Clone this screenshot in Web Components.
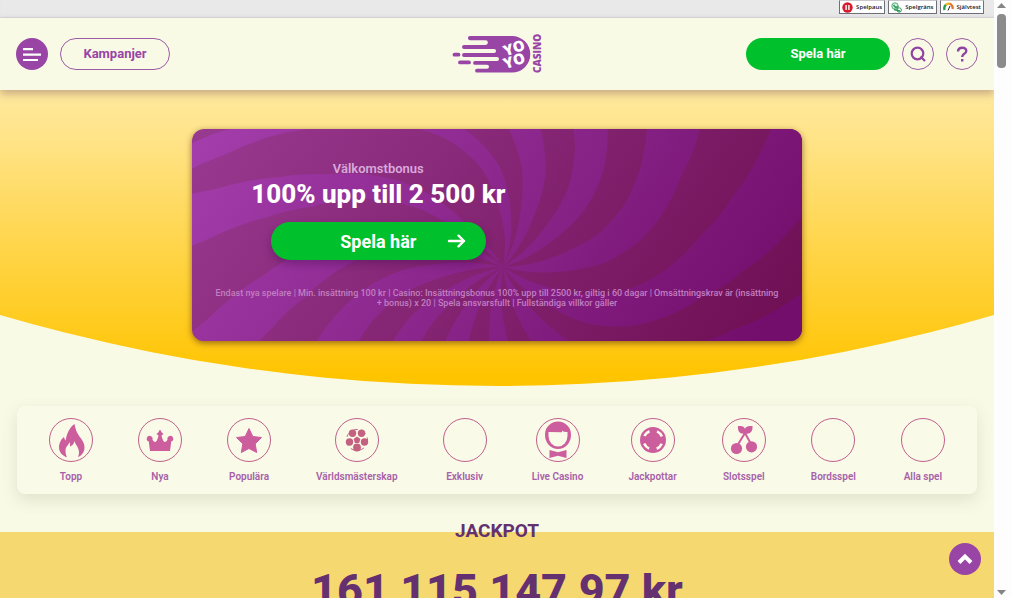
<!DOCTYPE html>
<html lang="sv">
<head>
<meta charset="utf-8">
<meta name="viewport" content="width=device-width, initial-scale=1">
<title>YoYo Casino</title>
<style>
  body { margin: 0; font-family: Roboto, "Liberation Sans", sans-serif; background: #f9fae6; }
</style>
</head>
<body>
<yoyo-app></yoyo-app>
<script>
const define = (name, html, setup) => {
  const tpl = document.createElement('template');
  tpl.innerHTML = `<style>*{box-sizing:border-box}button{font-family:inherit;margin:0;cursor:pointer}a{text-decoration:none}svg{display:block}</style>` + html;
  customElements.define(name, class extends HTMLElement {
    constructor() {
      super();
      this.attachShadow({ mode: 'open' }).append(tpl.content.cloneNode(true));
      if (setup) setup(this, this.shadowRoot);
    }
  });
};

/* Responsible gambling strip */
define('yoyo-safety-bar', `
<style>
  :host { display: flex; justify-content: flex-end; gap: 3px; height: 18px; padding-right: 10px; background: #e9e9e9; box-shadow: inset 0 -1px 1px #d8d8dc; }
  a { display: flex; align-items: center; gap: 3px; height: 14px; padding: 0 2px; border: 1px solid #707078; border-top-color: #c8c8cc; background: #fff; color: #16161c; font: 600 6px/12px "Open Sans", sans-serif; }
</style>
<a href="#spelpaus"><svg width="11" height="11" viewBox="0 0 11 11"><circle cx="5.500" cy="5.500" r="5.200" fill="#d71a2c"/><path d="M4.100 3v5M6.900 3v5" stroke="#fff" stroke-width="1.400"/></svg>Spelpaus</a>
<a href="#spelgrans"><svg width="11" height="11" viewBox="0 0 11 11"><circle cx="4" cy="4" r="3.200" fill="#d9f0e0" stroke="#2a9b58" stroke-width=".8"/><path d="M2.500 3l2 2.500 3-1M3 7.500L9 9" fill="none" stroke="#2a9b58" stroke-width="1.400"/><circle cx="8.200" cy="8" r="2.200" fill="none" stroke="#2a9b58"/></svg>Spelgräns</a>
<a href="#sjalvtest"><svg width="11" height="11" viewBox="0 0 11 11" fill="none" stroke-width="2.400"><path d="M1.700 8A4.500 4.500 0 0 1 3 2.800" stroke="#2c9a50"/><path d="M3 2.800A4.500 4.500 0 0 1 6.500 1.700" stroke="#f0b51c"/><path d="M6.500 1.700A4.500 4.500 0 0 1 9.500 7" stroke="#e5752a"/><path d="M5 8.500L7 4" stroke="#222" stroke-width="1"/></svg>Självtest</a>
`);

define('yoyo-logo', `
<style>:host { display: block; } svg { overflow: visible; } text { font-family: "Open Sans", sans-serif; font-weight: 800; }</style>
<a href="#hem" aria-label="YoYo Casino">
<svg width="90" height="42" viewBox="0 -3 90 42">
  <path fill="#9845a6" d="M18 0H60a18.300 18.300 0 0 1 0 36.600H25a1.900 1.900 0 0 1 0-3.800h10a2 2 0 0 0 0-4H23a1.900 1.900 0 0 1 0-3.800h22a2 2 0 0 0 0-4H12a1.900 1.900 0 0 1 0-3.900h30a2 2 0 0 0 0-4.100H12a2 2 0 0 1 0-4h21.500a2.100 2.100 0 0 0 0-4.800H18a2 2 0 0 1 0-4.200z"/>
  <path stroke="#9845a6" stroke-width="3.800" stroke-linecap="round" d="M2.500 18.700h4M8 26.400h9"/>
  <g transform="rotate(-19 61 18)" fill="#fff" font-size="15">
    <text x="53" y="18">YO</text><text x="49" y="30">YO</text>
  </g>
  <text transform="translate(89 37) rotate(-90)" fill="#9845a6" font-size="10">CASINO</text>
</svg></a>
`);

define('yoyo-header', `
<style>
  :host { display: grid; grid-template-columns: 1fr auto 1fr; align-items: center; height: 72px; padding: 0 16px; background: #f9fae6; position: relative; z-index: 1; box-shadow: 0 4px 8px rgba(120, 80, 90, .4); }
  div { display: flex; gap: 12px; }
  .right { justify-content: flex-end; }
  button, a { display: grid; place-items: center; height: 32px; padding: 0; border-radius: 16px; font-size: 13px; font-weight: 700; line-height: 16px; }
  .round { width: 32px; border: 1px solid #9b5ba5; background: none; }
  .menu { border: 0; background: #9845a6; }
  .camp { width: 110px; border: 1px solid #9b5ba5; color: #9845a6; }
  .play { width: 144px; border: 0; background: #00c12b; color: #fff; }
</style>
<div>
  <button class="round menu" aria-label="Meny"><svg width="32" height="32" fill="none" stroke="#fff" stroke-width="2.200"><path d="M7 11.200h10M7 16.700h18M7 22h15"/></svg></button>
  <a class="camp" href="#kampanjer">Kampanjer</a>
</div>
<yoyo-logo></yoyo-logo>
<div class="right">
  <button class="play">Spela här</button>
  <button class="round" aria-label="Sök"><svg width="16" height="16" fill="none" stroke="#8f45a0" stroke-width="2.200"><circle cx="7.500" cy="7.500" r="5.800"/><path d="M10.500 10.500l4.500 4.500"/></svg></button>
  <button class="round" aria-label="Hjälp"><svg width="16" height="16" fill="none" stroke="#8f45a0" stroke-width="2.400"><path d="M4 5.500C4.200.500 12.500.500 12.300 5c-.200 3-4.100 2.700-4.100 6M8.200 13v2.500"/></svg></button>
</div>
`);

/* Candy swirl: every ray is bounded by two spirals, each given as [angle, twist strength] */
define('yoyo-swirl', `
<style>:host { display: block; } svg { width: 100%; height: 100%; }</style>
<svg viewBox="0 0 610 212" preserveAspectRatio="xMidYMid slice" aria-hidden="true">
  <defs>
    <linearGradient id="d" gradientUnits="userSpaceOnUse" x1="60" y1="-60" x2="520" y2="270"><stop stop-color="#983990"/><stop offset="1" stop-color="#701055"/></linearGradient>
    <linearGradient id="l" gradientUnits="userSpaceOnUse" x1="60" y1="-60" x2="520" y2="270"><stop stop-color="#a23dab"/><stop offset="1" stop-color="#730e6c"/></linearGradient>
  </defs>
  <rect width="610" height="212" fill="url(#d)"/>
  <path class="rays" fill="url(#l)"/>
</svg>
`, (host, root) => {
  const twist = [[0, -60], [50, -51], [100, -43], [140, -34], [170, -26], [200, -18], [240, -10], [300, 0], [380, 9]];
  const rays = [
    [[9, 1], [27, 1]], [[45, 1], [62, 1]], [[78, 1], [93, 1]], [[108, 1], [122, 1]],
    [[152, 1.4], [158, 1.3]], [[165, .7], [175, .7]], [[190, .8], [203, .8]],
    [[216, .8], [231, .85]], [[246, .9], [261, .95]], [[276, 1], [291, 1]],
    [[306, 1], [321, 1]], [[337, 1], [355, 1]]
  ];
  const smooth = twist.flatMap((p, i) => {
    if (i === twist.length - 1) return [p];
    const q = twist[i + 1], a = twist[i - 1] || p, b = twist[i + 2] || q;
    return [0, .25, .5, .75].map(u => [p[0] + (q[0] - p[0]) * u,
      .5 * (2 * p[1] + (q[1] - a[1]) * u + (2 * a[1] - 5 * p[1] + 4 * q[1] - b[1]) * u * u + (3 * p[1] - a[1] - 3 * q[1] + b[1]) * u * u * u)]);
  });
  const spiral = ([deg, k]) => smooth.map(([r, t]) => {
    const a = (deg + k * t) * Math.PI / 180;
    return (311 + r * Math.cos(a)).toFixed(1) + ' ' + (138 - r * Math.sin(a)).toFixed(1);
  });
  const d = rays.map(([from, to]) => 'M' + spiral(from).join('L') + 'L' + spiral(to).reverse().join('L') + 'Z').join('');
  root.querySelector('.rays').setAttribute('d', d);
});

define('yoyo-hero', `
<style>
  :host { display: block; height: 296px; padding: 39px 16px 0; background: linear-gradient(#ffe99e, #ffe48a 15%, #ffc400 97%); clip-path: circle(1775px at 50% calc(100% - 1775px)); }
  article { position: relative; max-width: 610px; height: 212px; margin: 0 auto; padding: 31px 29px 0; border-radius: 12px; overflow: hidden; text-align: center; }
  .shade { max-width: 610px; margin: 0 auto; border-radius: 12px; box-shadow: 0 2px 6px rgba(80, 40, 20, .6); }
  yoyo-swirl { position: absolute; inset: 0; }
  .offer { position: relative; width: 57%; display: flex; flex-direction: column; align-items: center; }
  p { margin: 0; }
  .kicker { font-size: 13px; line-height: 18px; font-weight: 600; color: #d9a9dc; }
  h1 { margin: 0 0 12px; font-size: 26px; line-height: 32px; font-weight: 800; color: #fff; white-space: nowrap; }
  button { display: grid; grid-template-columns: 1fr auto 1fr; align-items: center; width: 215px; height: 38px; padding: 0 20px; border: 0; border-radius: 19px; background: #00c12b; color: #fff; font-size: 18px; font-weight: 700; box-shadow: 0 4px 8px rgba(70, 10, 80, .4); }
  button span { grid-column: 2; }
  svg { justify-self: end; }
  .terms { position: relative; margin: 28px -8px 0; font-size: 9px; line-height: 10px; font-weight: 500; color: #c27fc0; }
</style>
<div class="shade"><article>
  <yoyo-swirl></yoyo-swirl>
  <div class="offer">
    <p class="kicker">Välkomstbonus</p>
    <h1>100% upp till 2 500 kr</h1>
    <button><span>Spela här</span><svg width="19" height="14" fill="none" stroke="#fff" stroke-width="2.400" stroke-linecap="round" stroke-linejoin="round"><path d="M2 7h15M11.500 1.700L17 7l-5.500 5.300"/></svg></button>
  </div>
  <p class="terms">Endast nya spelare | Min. insättning 100 kr | Casino: Insättningsbonus 100% upp till 2500 kr, giltig i 60 dagar | Omsättningskrav är (insättning + bonus) x 20 | Spela ansvarsfullt | Fullständiga villkor gäller</p>
</article></div>
`);

define('yoyo-category', `
<style>
  :host { display: block; }
  a { display: flex; flex-direction: column; align-items: center; gap: 8px; color: #a661a8; font-size: 10px; line-height: 14px; font-weight: 600; white-space: nowrap; }
  i { display: grid; place-items: center; width: 44px; height: 44px; border: 1px solid #c0608c; border-radius: 50%; color: #cd5e9e; }
  ::slotted(svg) { display: block; fill: currentColor; }
</style>
<a href="#kategori"><i><slot name="icon"></slot></i><span><slot></slot></span></a>
`);

define('yoyo-categories', `
<style>
  :host { display: flex; justify-content: space-between; height: 88px; margin: 20px 17px 0; padding: 12px 32px 0; border-radius: 8px; box-shadow: 0 6px 16px rgba(100, 110, 80, .17); background: #fafae8; }
</style>
<yoyo-category>Topp<svg slot="icon" width="42" height="42"><path d="M24.500 5c1 5 2 8.500 5 12.500 3.500 4.500 5 7 5 11 0 4.500-3 8.500-6.500 9.500 1.800-4 1-7-.5-10-1-2-2.500-3.500-3-6-.5 3-2.500 5-4.500 5.500.2-1.500 0-3-.5-4.500-.8 3-4 4.500-4 8.500 0 3 .5 5 1.500 6.700-4.500-1.200-8-5-8-9.700 0-4.500 2.500-9 5-10.500.3 1.500.8 2.500 1.700 3.500C16.500 14.500 20 8 24.500 5z"/></svg></yoyo-category>
<yoyo-category>Nya<svg slot="icon" width="42" height="42"><path d="M11 32L9.800 22.500a2.900 2.900 0 1 1 3.700-2.200c-.2 1 1.500 2.700 3 2.700 1.500-1 2.500-4 3-6.500L17.500 15l1.700-1.500L21 10.500l1.800 3 1.700 1.500-2 1.500c.5 2.500 1.500 5.500 3 6.500 1.500 0 3.200-1.700 3-2.700a2.900 2.900 0 1 1 3.700 2.200L31 32z"/></svg></yoyo-category>
<yoyo-category>Populära<svg slot="icon" width="42" height="42"><path stroke="currentColor" stroke-linejoin="round" d="M21 9.500l3.800 8 8.700 1-6.300 6.400 1.500 8.600-7.700-4-7.700 4 1.500-8.600-6.300-6.400 8.700-1z"/></svg></yoyo-category>
<yoyo-category>Världsmästerskap<svg slot="icon" width="42" height="42" style="color:#c46080"><circle cx="21" cy="21" r="10.500" fill="none" stroke="currentColor" stroke-dasharray="5 4"/><g><circle cx="16.500" cy="14.300" r="3.700"/><circle cx="25.500" cy="14.300" r="3.700"/><circle cx="13.500" cy="23" r="3.700"/><circle cx="28.500" cy="23" r="3.700"/><circle cx="21" cy="28.500" r="3.900"/><path d="M21 17.500l3.400 2.500-1.300 4h-4.200l-1.300-4z"/></g></svg></yoyo-category>
<yoyo-category>Exklusiv</yoyo-category>
<yoyo-category>Live Casino<svg slot="icon" width="42" height="42"><path fill-rule="evenodd" d="M21 2.500a13 13 0 0 1 13 13.500 13 14 0 0 1-26 0A13 13 0 0 1 21 2.500zM11.500 13v4a9.500 10.500 0 0 0 19 0v-4l-4-.2-.8-1.500-.8 2z"/><path d="M12.500 31l8.500 2.300 8.500-2.300v8L21 36.800 12.500 39z"/></svg></yoyo-category>
<yoyo-category>Jackpottar<svg slot="icon" width="42" height="42"><circle cx="21" cy="21" r="13"/><circle cx="21" cy="21" r="9.500" fill="none" stroke="#fafae8" stroke-width="2.600" stroke-dasharray="7.200 7.723" stroke-dashoffset="-3.860"/></svg></yoyo-category>
<yoyo-category>Slotsspel<svg slot="icon" width="42" height="42"><circle cx="13.500" cy="29.500" r="5.600"/><circle cx="28.500" cy="27.800" r="5.600"/><path d="M14 27l8-13 6 11" fill="none" stroke="currentColor" stroke-width="2"/><path d="M22 14.500c-5 1-7.500-2-7-7.500 4 0 6.500.5 7 3 .5-2.500 3.500-3 7.500-3 .5 5.500-2.500 8.500-7.500 7.500z"/></svg></yoyo-category>
<yoyo-category>Bordsspel</yoyo-category>
<yoyo-category>Alla spel</yoyo-category>
`);

define('yoyo-jackpot', `
<style>
  :host { display: flex; flex-direction: column; align-items: center; margin-top: 38px; height: 120px; background: #f5d870; color: #64306f; }
  h2 { margin: -13px 0 0; font-size: 19px; line-height: 24px; font-weight: 700; }
  p { margin: 24px 0 0; font-size: 45px; line-height: 48px; font-weight: 800; }
</style>
<h2>JACKPOT</h2>
<p>161 115 147,97 kr</p>
`);

define('yoyo-scrollbar', `
<style>
  :host { display: flex; flex-direction: column; align-items: center; width: 18px; padding: 2px 3px 2px 0; background: #fdfdfd; }
  span { width: 9px; height: 54px; margin-top: 6px; border-radius: 4px; background: #8b8b8b; }
  svg:last-child { margin-top: auto; }
</style>
<svg width="9" height="6" fill="#858585"><path d="M0 6l4.500-5L9 6z"/></svg>
<span></span>
<svg width="9" height="6" fill="#858585"><path d="M0 0h9L4.500 5z"/></svg>
`);

define('yoyo-app', `
<style>
  :host { display: flex; height: 100vh; overflow: hidden; }
  main { position: relative; flex: 1; min-width: 0; overflow: hidden; background: #f9fae6; }
  .up { position: absolute; right: 13px; bottom: 23px; display: grid; place-items: center; width: 32px; height: 32px; padding: 0; border: 0; border-radius: 50%; background: #9845a6; }
</style>
<main>
  <yoyo-safety-bar></yoyo-safety-bar>
  <yoyo-header></yoyo-header>
  <yoyo-hero></yoyo-hero>
  <yoyo-categories></yoyo-categories>
  <yoyo-jackpot></yoyo-jackpot>
  <button class="up" aria-label="Till toppen"><svg width="16" height="12" fill="none" stroke="#fff" stroke-width="4"><path d="M2 9.500l6-6 6 6"/></svg></button>
</main>
<yoyo-scrollbar></yoyo-scrollbar>
`);
</script>
</body>
</html>
